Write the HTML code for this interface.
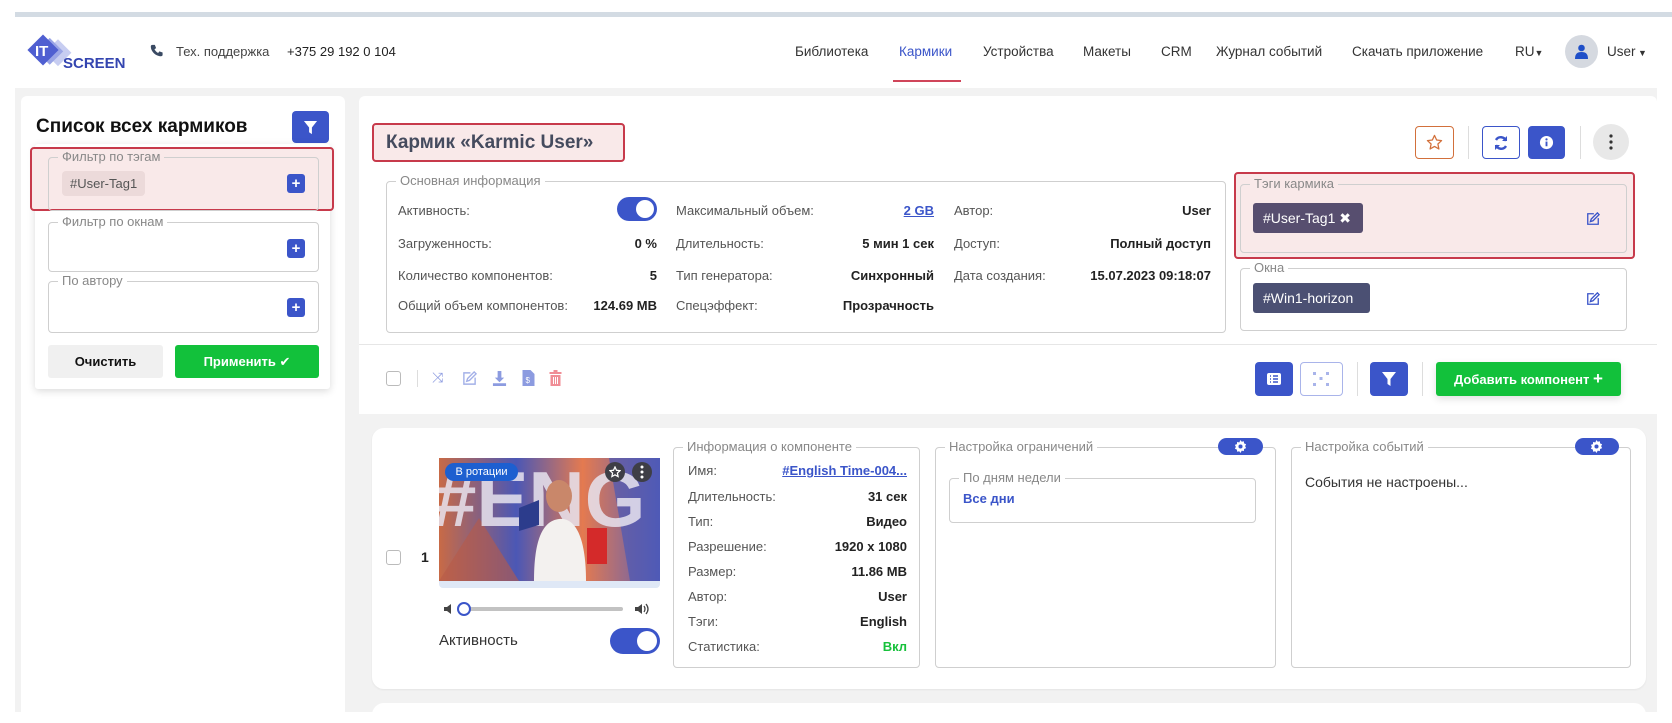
<!DOCTYPE html>
<html><head><meta charset="utf-8">
<style>
*{box-sizing:border-box;margin:0;padding:0}
body{width:1672px;height:723px;background:#fff;font-family:"Liberation Sans","DejaVu Sans",sans-serif;color:#333;position:relative;overflow:hidden;font-size:13px}
.a{position:absolute}
.fs{position:absolute;border:1px solid #cfcfcf;border-radius:4px}
.lg{position:absolute;top:-9px;background:#fff;padding:0 4px;color:#888;font-size:13px;line-height:16px;white-space:nowrap}
.btnb{position:absolute;background:#3b55c9;border-radius:4px}
.lbl{position:absolute;color:#555;font-size:13px;white-space:nowrap}
.val{position:absolute;font-weight:bold;color:#222;font-size:13px;text-align:right;white-space:nowrap}
.nav{position:absolute;top:44px;font-size:13.5px;color:#333;white-space:nowrap}
.plus{position:absolute;width:18px;height:19px;background:#3b55c9;border-radius:3px;color:#fff;font-weight:bold;font-size:15px;line-height:19px;text-align:center}
.sep{position:absolute;width:1px;background:#ddd}
</style></head><body>
<div class="a" style="left:15px;top:12px;width:1657px;height:5px;background:#d3dbe3"></div>
<svg class="a" style="left:24px;top:34px" width="110" height="40" viewBox="0 0 110 40">
<rect x="16" y="5" width="19" height="19" transform="rotate(45 25.5 14.5) translate(9 -3)" fill="#c7cdf1"/>
<rect x="12" y="5" width="19" height="19" transform="rotate(45 21.5 14.5) translate(5 -1)" fill="#9aa5e6"/>
<rect x="8" y="5" width="22" height="22" transform="rotate(45 19 16)" fill="#4f5fd1"/>
<text x="11" y="22" fill="#fff" font-family="Liberation Sans" font-weight="bold" font-size="15">IT</text>
<text x="39" y="34" fill="#3445b0" font-family="Liberation Sans" font-weight="bold" font-size="15">SCREEN</text>
</svg>
<svg class="a" style="left:150px;top:44px" width="13" height="13" viewBox="0 0 16 16"><path d="M3 1l3 0 1.5 4-2 1.5c1 2 2.5 3.5 4.5 4.5l1.5-2 4 1.5v3c0 1-1 1.5-2 1.5C7 15 1 9 1 3c0-1 .5-2 2-2z" fill="#3a4a63"/></svg>
<div class="a" style="left:176px;top:44px;font-size:13px;color:#444">Тех. поддержка</div>
<div class="a" style="left:287px;top:44px;font-size:13px;color:#222">+375 29 192 0 104</div>
<div class="nav" style="left:795px">Библиотека</div>
<div class="nav" style="left:899px;color:#3b55c9">Кармики</div>
<div class="a" style="left:893px;top:80px;width:68px;height:2px;background:#d0455a"></div>
<div class="nav" style="left:983px">Устройства</div>
<div class="nav" style="left:1083px">Макеты</div>
<div class="nav" style="left:1161px">CRM</div>
<div class="nav" style="left:1216px">Журнал событий</div>
<div class="nav" style="left:1352px">Скачать приложение</div>
<div class="nav" style="left:1515px">RU<span style="font-size:9px">▼</span></div>
<div class="a" style="left:1565px;top:35px;width:33px;height:33px;border-radius:50%;background:#d5d9e0"></div>
<svg class="a" style="left:1575px;top:44px" width="13" height="15" viewBox="0 0 13 15"><circle cx="6.5" cy="4" r="3.3" fill="#1f4fc8"/><path d="M0 15c0-5 2-7 6.5-7S13 10 13 15z" fill="#1f4fc8"/></svg>
<div class="nav" style="left:1607px">User<span style="font-size:9px"> ▼</span></div>

<div class="a" style="left:15px;top:88px;width:1642px;height:624px;background:#f2f2f2"></div>

<div class="a" style="left:21px;top:96px;width:324px;height:616px;background:#fff;border-radius:6px 6px 0 0"></div>
<div class="a" style="left:36px;top:116px;font-size:19px;font-weight:bold;color:#111">Список всех кармиков</div>
<div class="btnb" style="left:292px;top:111px;width:37px;height:32px"></div>
<svg class="a" style="left:303px;top:120px" width="15" height="15" viewBox="0 0 16 16"><path d="M1 1h14l-5.5 7v7l-3-2V8z" fill="#fff"/></svg>
<div class="a" style="left:35px;top:144px;width:295px;height:245px;background:#fff;box-shadow:0 2px 8px rgba(0,0,0,.15);border-radius:3px"></div>
<div class="a" style="left:30px;top:147px;width:304px;height:64px;background:#f9e9e9;border:2px solid #c73a4b;border-radius:4px"></div>
<div class="fs" style="left:48px;top:157px;width:271px;height:54px"><div class="lg" style="left:9px;background:#f9e9e9">Фильтр по тэгам</div></div>
<div class="a" style="left:62px;top:171px;width:83px;height:25px;background:#ecdada;border-radius:4px;color:#555;font-size:13px;line-height:25px;padding-left:8px">#User-Tag1</div>
<div class="plus" style="left:287px;top:174px">+</div>
<div class="fs" style="left:48px;top:222px;width:271px;height:50px"><div class="lg" style="left:9px">Фильтр по окнам</div></div>
<div class="plus" style="left:287px;top:239px">+</div>
<div class="fs" style="left:48px;top:281px;width:271px;height:52px"><div class="lg" style="left:9px">По автору</div></div>
<div class="plus" style="left:287px;top:298px">+</div>
<div class="a" style="left:48px;top:345px;width:115px;height:33px;background:#f0f0f0;border-radius:3px;text-align:center;line-height:33px;font-weight:bold;color:#111;font-size:13px">Очистить</div>
<div class="a" style="left:175px;top:345px;width:144px;height:33px;background:#12c13b;border-radius:3px;text-align:center;line-height:33px;font-weight:bold;color:#fff;font-size:13px">Применить ✔</div>

<div class="a" style="left:359px;top:96px;width:1298px;height:318px;background:#fff;border-radius:6px 6px 0 0"></div>
<div class="a" style="left:372px;top:123px;width:253px;height:39px;background:#f9e9e9;border:2px solid #c73a4b;border-radius:4px;font-size:19px;font-weight:bold;color:#454b5e;line-height:35px;padding-left:12px;white-space:nowrap">Кармик «Karmic User»</div>
<div class="a" style="left:1415px;top:126px;width:39px;height:33px;border:1px solid #d2703b;border-radius:4px"></div>
<svg class="a" style="left:1426px;top:134px" width="17" height="17" viewBox="0 0 24 24"><path d="M12 2l3 6.5 7 .8-5.2 4.8 1.4 7L12 17.6 5.8 21.1l1.4-7L2 9.3l7-.8z" fill="none" stroke="#d2703b" stroke-width="1.8" stroke-linejoin="round"/></svg>
<div class="sep" style="left:1468px;top:126px;height:33px"></div>
<div class="a" style="left:1482px;top:126px;width:38px;height:33px;border:1px solid #3b55c9;border-radius:4px"></div>
<svg class="a" style="left:1493px;top:135px" width="16" height="16" viewBox="0 0 16 16"><path d="M13 6A5.5 5.5 0 0 0 3 5M3 10a5.5 5.5 0 0 0 10 1" fill="none" stroke="#3b55c9" stroke-width="2.4"/><path d="M14 1v5H9zM2 15v-5h5z" fill="#3b55c9"/></svg>
<div class="btnb" style="left:1528px;top:126px;width:37px;height:33px"></div>
<svg class="a" style="left:1539px;top:135px" width="15" height="15" viewBox="0 0 16 16"><circle cx="8" cy="8" r="7" fill="#fff"/><rect x="7" y="7" width="2" height="5" fill="#3b55c9"/><circle cx="8" cy="4.6" r="1.2" fill="#3b55c9"/></svg>
<div class="sep" style="left:1580px;top:126px;height:33px"></div>
<div class="a" style="left:1593px;top:124px;width:36px;height:36px;border-radius:50%;background:#e8e8e8"></div>
<svg class="a" style="left:1609px;top:133px" width="4" height="18" viewBox="0 0 4 18"><circle cx="2" cy="3" r="1.6" fill="#333"/><circle cx="2" cy="9" r="1.6" fill="#333"/><circle cx="2" cy="15" r="1.6" fill="#333"/></svg>

<div class="fs" style="left:386px;top:181px;width:840px;height:152px"><div class="lg" style="left:9px">Основная информация</div></div>
<div class="lbl" style="left:398px;top:203px">Активность:</div>
<div class="a" style="left:617px;top:197px;width:40px;height:24px;border-radius:12px;background:#3b55c9"><div class="a" style="right:3px;top:3px;width:18px;height:18px;border-radius:50%;background:#fff"></div></div>
<div class="lbl" style="left:398px;top:236px">Загруженность:</div><div class="val" style="right:1015px;top:236px">0 %</div>
<div class="lbl" style="left:398px;top:268px">Количество компонентов:</div><div class="val" style="right:1015px;top:268px">5</div>
<div class="lbl" style="left:398px;top:298px">Общий объем компонентов:</div><div class="val" style="right:1015px;top:298px">124.69 MB</div>
<div class="lbl" style="left:676px;top:203px">Максимальный объем:</div><div class="val" style="right:738px;top:203px;color:#3b55c9;text-decoration:underline">2 GB</div>
<div class="lbl" style="left:676px;top:236px">Длительность:</div><div class="val" style="right:738px;top:236px">5 мин 1 сек</div>
<div class="lbl" style="left:676px;top:268px">Тип генератора:</div><div class="val" style="right:738px;top:268px">Синхронный</div>
<div class="lbl" style="left:676px;top:298px">Спецэффект:</div><div class="val" style="right:738px;top:298px">Прозрачность</div>
<div class="lbl" style="left:954px;top:203px">Автор:</div><div class="val" style="right:461px;top:203px">User</div>
<div class="lbl" style="left:954px;top:236px">Доступ:</div><div class="val" style="right:461px;top:236px">Полный доступ</div>
<div class="lbl" style="left:954px;top:268px">Дата создания:</div><div class="val" style="right:461px;top:268px">15.07.2023 09:18:07</div>

<div class="a" style="left:1234px;top:172px;width:401px;height:87px;background:#f9e9e9;border:2px solid #c73a4b;border-radius:4px"></div>
<div class="fs" style="left:1240px;top:184px;width:387px;height:69px"><div class="lg" style="left:9px;background:#f9e9e9">Тэги кармика</div></div>
<div class="a" style="left:1253px;top:203px;width:110px;height:30px;background:#574e6f;border-radius:3px;color:#fff;font-size:14px;line-height:30px;padding-left:10px;white-space:nowrap">#User-Tag1 <b>✖</b></div>
<svg class="a" style="left:1586px;top:212px" width="14" height="14" viewBox="0 0 16 16"><path d="M9 2H2v12h12V7" fill="none" stroke="#3b55c9" stroke-width="1.5"/><path d="M13 1l2 2-7 7-3 1 1-3z" fill="none" stroke="#3b55c9" stroke-width="1.5"/></svg>
<div class="fs" style="left:1240px;top:268px;width:387px;height:63px"><div class="lg" style="left:9px">Окна</div></div>
<div class="a" style="left:1253px;top:283px;width:117px;height:30px;background:#4b5073;border-radius:3px;color:#fff;font-size:14px;line-height:30px;padding-left:10px;white-space:nowrap">#Win1-horizon</div>
<svg class="a" style="left:1586px;top:292px" width="14" height="14" viewBox="0 0 16 16"><path d="M9 2H2v12h12V7" fill="none" stroke="#3b55c9" stroke-width="1.5"/><path d="M13 1l2 2-7 7-3 1 1-3z" fill="none" stroke="#3b55c9" stroke-width="1.5"/></svg>

<div class="a" style="left:359px;top:344px;width:1298px;height:1px;background:#e6e6e6"></div>
<div class="a" style="left:386px;top:371px;width:15px;height:15px;border:1.5px solid #bbb;border-radius:3px"></div>
<div class="sep" style="left:417px;top:370px;height:17px"></div>
<div class="a" style="left:432px;top:369px;color:#8c9be0;font-size:14px">⤨</div>
<svg class="a" style="left:462px;top:371px" width="15" height="15" viewBox="0 0 16 16"><path d="M9 2H2v12h12V7" fill="none" stroke="#a3b0e8" stroke-width="1.5"/><path d="M13 1l2 2-7 7-3 1 1-3z" fill="none" stroke="#a3b0e8" stroke-width="1.5"/></svg>
<svg class="a" style="left:492px;top:371px" width="15" height="15" viewBox="0 0 16 16"><path d="M6 0h4v7h3l-5 5-5-5h3z M1 13h14v3H1z" fill="#8c9be0"/></svg>
<svg class="a" style="left:522px;top:370px" width="13" height="16" viewBox="0 0 12 16"><path d="M0 0h8l4 4v12H0z" fill="#8c9be0"/><text x="3" y="13" font-size="8" fill="#fff" font-family="Liberation Sans">$</text></svg>
<svg class="a" style="left:549px;top:370px" width="13" height="16" viewBox="0 0 12 16"><path d="M0 2h12v2H0zM4 0h4v2H4zM1 5h10v11H1z" fill="#f08d95"/><path d="M4 7v7M6 7v7M8 7v7" stroke="#fff" stroke-width="1"/></svg>

<div class="btnb" style="left:1255px;top:362px;width:38px;height:34px"></div>
<svg class="a" style="left:1267px;top:373px" width="14" height="12" viewBox="0 0 14 12"><rect width="14" height="12" rx="2" fill="#fff"/><path d="M3 3h1M6 3h5M3 6h1M6 6h5M3 9h1M6 9h5" stroke="#3b55c9" stroke-width="1.4"/></svg>
<div class="a" style="left:1300px;top:362px;width:43px;height:34px;border:1px solid #a9b4ea;border-radius:4px"></div>
<svg class="a" style="left:1313px;top:372px" width="16" height="14" viewBox="0 0 16 14"><g fill="#a9b4ea"><rect x="0" y="0" width="3" height="3"/><rect x="13" y="0" width="3" height="3"/><rect x="6.5" y="5" width="3" height="3"/><rect x="0" y="11" width="3" height="3"/><rect x="13" y="11" width="3" height="3"/></g></svg>
<div class="sep" style="left:1357px;top:362px;height:34px"></div>
<div class="btnb" style="left:1370px;top:362px;width:38px;height:34px"></div>
<svg class="a" style="left:1381px;top:371px" width="16" height="16" viewBox="0 0 16 16"><path d="M1 1h14l-5.5 7v7l-3-2V8z" fill="#fff"/></svg>
<div class="sep" style="left:1422px;top:362px;height:34px"></div>
<div class="a" style="left:1436px;top:362px;width:185px;height:34px;background:#12c13b;border-radius:3px;color:#fff;font-weight:bold;font-size:13px;line-height:34px;text-align:center;box-shadow:0 3px 8px rgba(0,0,0,.12);white-space:nowrap">Добавить компонент <span style="font-size:17px">+</span></div>

<div class="a" style="left:372px;top:428px;width:1274px;height:261px;background:#fff;border-radius:12px;box-shadow:0 1px 2px rgba(0,0,0,.06)"></div>
<div class="a" style="left:372px;top:703px;width:1274px;height:20px;background:#fff;border-radius:12px 12px 0 0"></div>
<div class="a" style="left:386px;top:550px;width:15px;height:15px;border:1.5px solid #bbb;border-radius:3px"></div>
<div class="a" style="left:421px;top:549px;font-weight:bold;font-size:14px;color:#222">1</div>
<div class="a" style="left:439px;top:458px;width:221px;height:130px;background:#dfe8f6;border-radius:4px"></div>
<svg class="a" style="left:439px;top:458px" width="221" height="123" viewBox="0 0 221 123">
<defs><linearGradient id="g" x1="0" x2="1"><stop offset="0" stop-color="#c86a46"/><stop offset=".35" stop-color="#4b57b5"/><stop offset=".65" stop-color="#e47a50"/><stop offset="1" stop-color="#5a5fb8"/></linearGradient></defs>
<rect width="221" height="123" fill="url(#g)"/>
<path d="M0 123L40 60 80 123z" fill="#b75a48" opacity=".6"/>
<path d="M170 0h51v123h-30z" fill="#4a58b6" opacity=".7"/>
<text x="-6" y="68" font-family="Liberation Sans" font-weight="bold" font-size="78" fill="#e8e4ef" opacity=".85">#ENG</text>
<ellipse cx="120" cy="38" rx="13" ry="16" fill="#c9876a"/>
<path d="M95 123c0-40 8-60 25-62s27 20 27 62z" fill="#f3f1ef"/>
<rect x="148" y="70" width="20" height="36" fill="#d42a2a"/>
<path d="M80 50l20-8 0 25-20 6z" fill="#2c3c8c"/>
</svg>
<div class="a" style="left:445px;top:463px;width:73px;height:18px;background:#1d5fd0;border-radius:9px;color:#fff;font-size:11px;line-height:18px;text-align:center">В ротации</div>
<div class="a" style="left:605px;top:462px;width:20px;height:20px;border-radius:50%;background:#3e3e46"></div>
<svg class="a" style="left:609px;top:466px" width="12" height="12" viewBox="0 0 24 24"><path d="M12 2l3 6.5 7 .8-5.2 4.8 1.4 7L12 17.6 5.8 21.1l1.4-7L2 9.3l7-.8z" fill="none" stroke="#fff" stroke-width="2.5"/></svg>
<div class="a" style="left:632px;top:462px;width:20px;height:20px;border-radius:50%;background:#3e3e46"></div>
<svg class="a" style="left:640px;top:465px" width="4" height="14" viewBox="0 0 4 14"><circle cx="2" cy="2" r="1.5" fill="#fff"/><circle cx="2" cy="7" r="1.5" fill="#fff"/><circle cx="2" cy="12" r="1.5" fill="#fff"/></svg>
<svg class="a" style="left:444px;top:604px" width="10" height="10" viewBox="0 0 10 10"><path d="M0 3h3l4-3v10L3 7H0z" fill="#444"/></svg>
<div class="a" style="left:465px;top:607px;width:158px;height:4px;background:#c2c2c2;border-radius:2px"></div>
<div class="a" style="left:457px;top:602px;width:14px;height:14px;border-radius:50%;border:2px solid #3b55c9;background:#fff"></div>
<svg class="a" style="left:635px;top:603px" width="14" height="12" viewBox="0 0 14 12"><path d="M0 4h3l4-3v10L3 8H0z" fill="#444"/><path d="M9 3q2 3 0 6M11 1q4 5 0 10" fill="none" stroke="#444" stroke-width="1.3"/></svg>
<div class="a" style="left:439px;top:632px;font-size:15px;color:#333">Активность</div>
<div class="a" style="left:610px;top:628px;width:50px;height:26px;border-radius:13px;background:#3b55c9"><div class="a" style="right:3px;top:3px;width:20px;height:20px;border-radius:50%;background:#fff"></div></div>

<div class="fs" style="left:673px;top:447px;width:247px;height:221px"><div class="lg" style="left:9px">Информация о компоненте</div></div>
<div class="lbl" style="left:688px;top:463px">Имя:</div><div class="val" style="right:765px;top:463px;color:#3b55c9;text-decoration:underline">#English Time-004...</div>
<div class="lbl" style="left:688px;top:489px">Длительность:</div><div class="val" style="right:765px;top:489px">31 сек</div>
<div class="lbl" style="left:688px;top:514px">Тип:</div><div class="val" style="right:765px;top:514px">Видео</div>
<div class="lbl" style="left:688px;top:539px">Разрешение:</div><div class="val" style="right:765px;top:539px">1920 x 1080</div>
<div class="lbl" style="left:688px;top:564px">Размер:</div><div class="val" style="right:765px;top:564px">11.86 MB</div>
<div class="lbl" style="left:688px;top:589px">Автор:</div><div class="val" style="right:765px;top:589px">User</div>
<div class="lbl" style="left:688px;top:614px">Тэги:</div><div class="val" style="right:765px;top:614px">English</div>
<div class="lbl" style="left:688px;top:639px">Статистика:</div><div class="val" style="right:765px;top:639px;color:#17c13b">Вкл</div>

<div class="fs" style="left:935px;top:447px;width:341px;height:221px"><div class="lg" style="left:9px">Настройка ограничений</div></div>
<div class="a" style="left:1218px;top:438px;width:45px;height:17px;border-radius:9px;background:#3b55c9"></div>
<svg class="a" style="left:1234px;top:440px" width="13" height="13" viewBox="0 0 16 16"><path d="M8 0l1.5 2.2 2.6-.7.3 2.7 2.5 1-1.2 2.4 1.2 2.4-2.5 1-.3 2.7-2.6-.7L8 16l-1.5-2.2-2.6.7-.3-2.7-2.5-1 1.2-2.4L1.1 6l2.5-1 .3-2.7 2.6.7z" fill="#fff"/><circle cx="8" cy="8" r="2.5" fill="#3b55c9"/></svg>
<div class="fs" style="left:949px;top:478px;width:307px;height:45px"><div class="lg" style="left:9px">По дням недели</div></div>
<div class="a" style="left:963px;top:491px;font-weight:bold;color:#3b55c9;font-size:13px">Все дни</div>

<div class="fs" style="left:1291px;top:447px;width:340px;height:221px"><div class="lg" style="left:9px">Настройка событий</div></div>
<div class="a" style="left:1575px;top:438px;width:44px;height:17px;border-radius:9px;background:#3b55c9"></div>
<svg class="a" style="left:1590px;top:440px" width="13" height="13" viewBox="0 0 16 16"><path d="M8 0l1.5 2.2 2.6-.7.3 2.7 2.5 1-1.2 2.4 1.2 2.4-2.5 1-.3 2.7-2.6-.7L8 16l-1.5-2.2-2.6.7-.3-2.7-2.5-1 1.2-2.4L1.1 6l2.5-1 .3-2.7 2.6.7z" fill="#fff"/><circle cx="8" cy="8" r="2.5" fill="#3b55c9"/></svg>
<div class="a" style="left:1305px;top:474px;font-size:14px;color:#333">События не настроены...</div>
</body></html>
